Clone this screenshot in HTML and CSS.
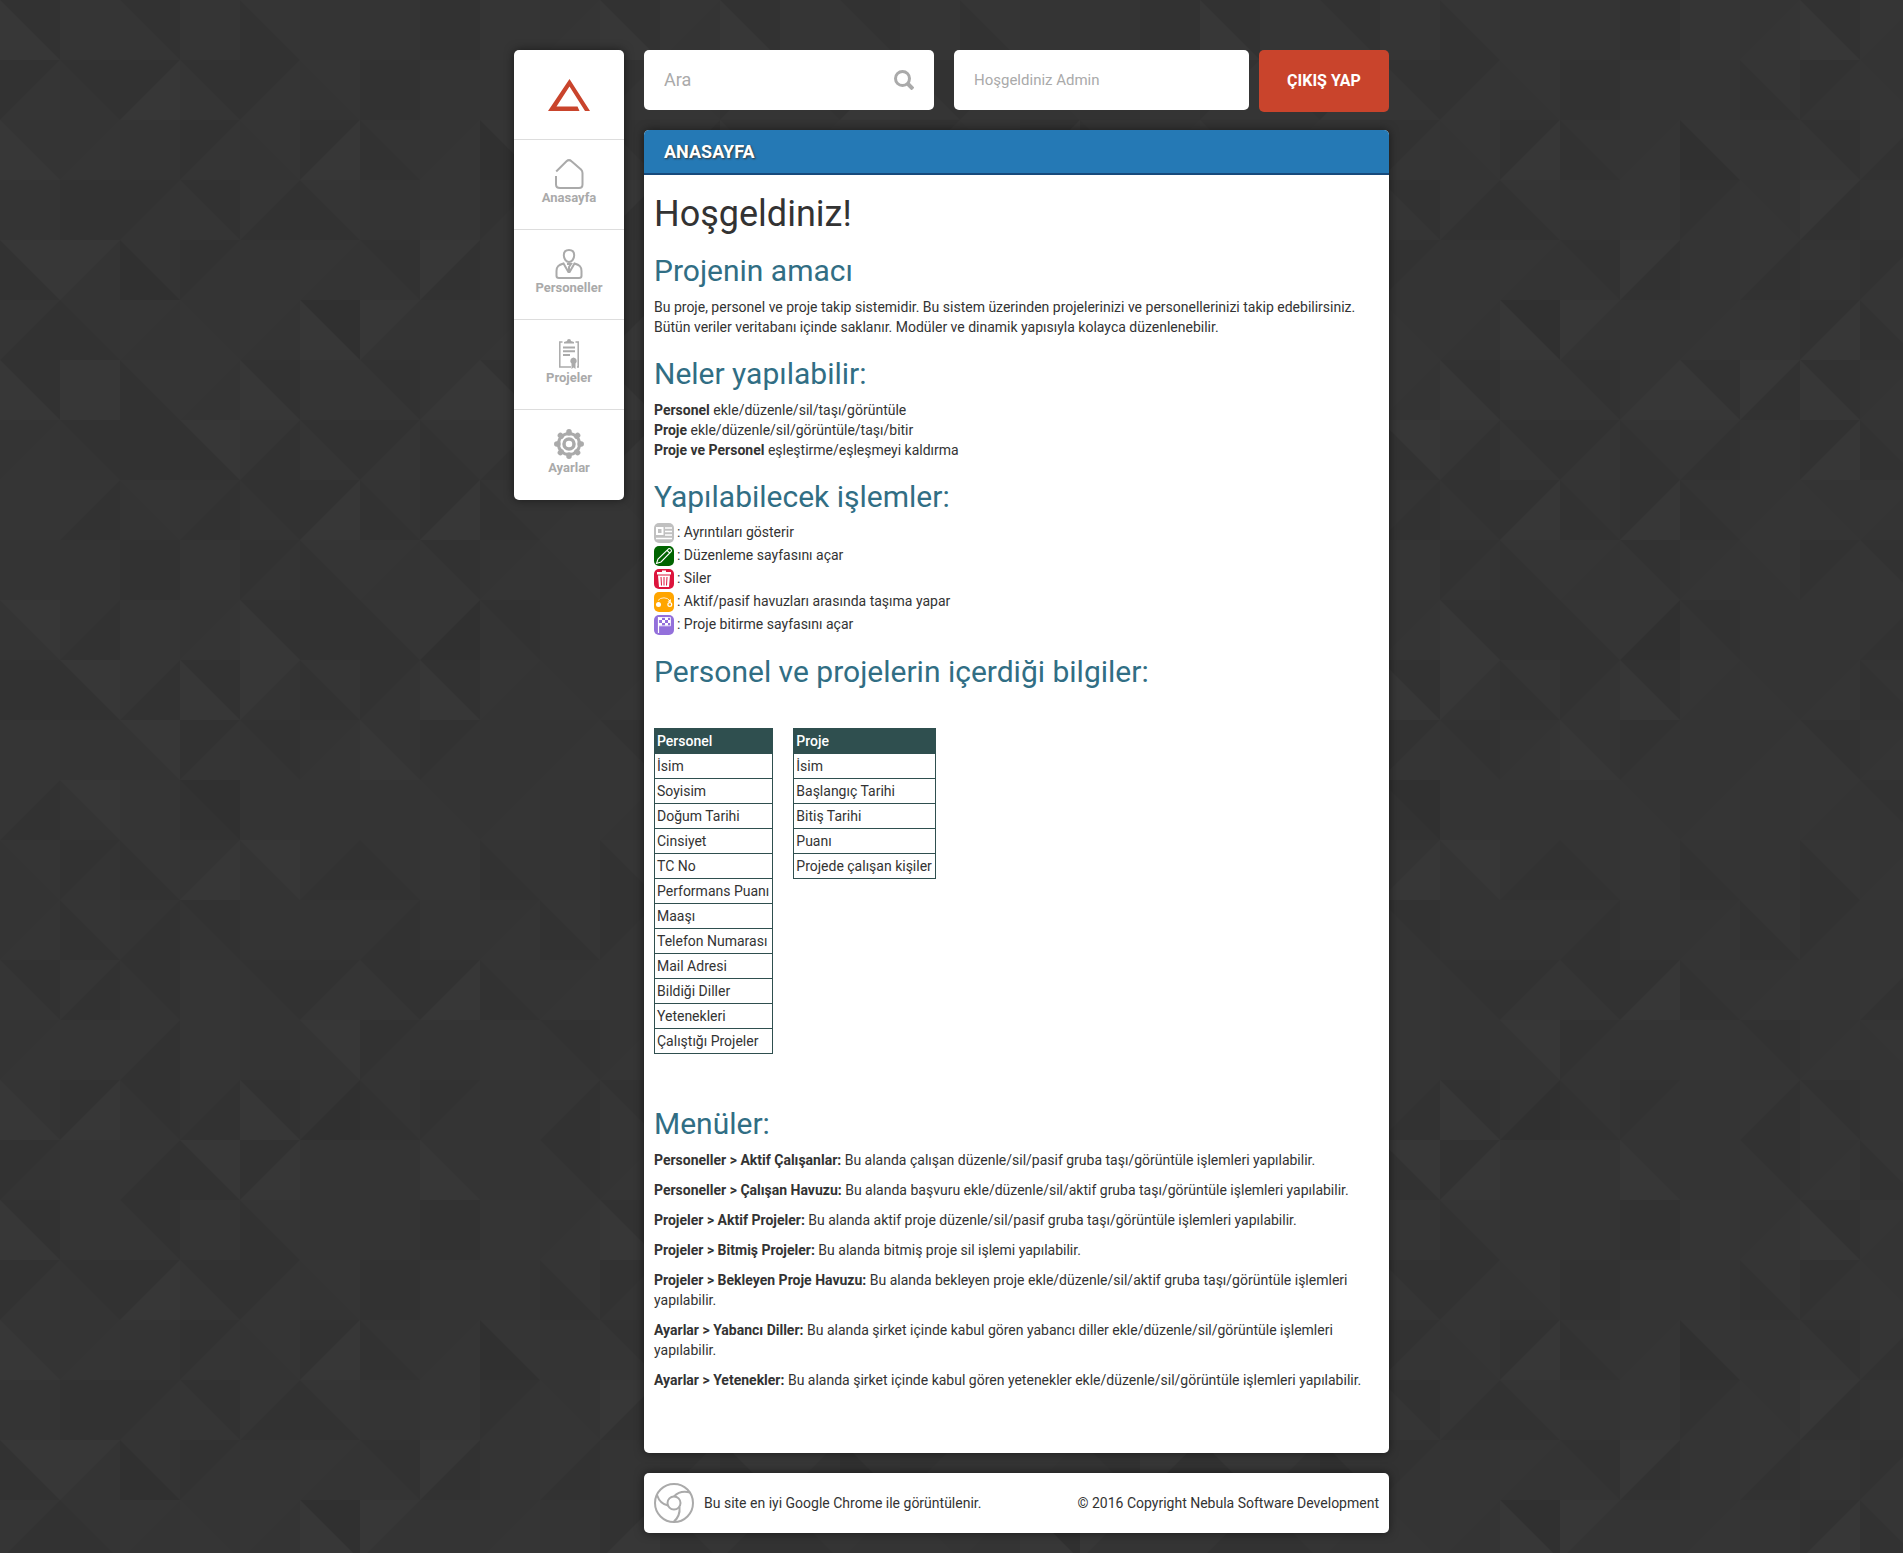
FILE: index.html
```html
<!DOCTYPE html>
<html lang="tr">
<head>
<meta charset="utf-8">
<meta name="viewport" content="width=device-width, initial-scale=1">
<title>Anasayfa</title>
<link rel="stylesheet" href="styles.css">
<script src="background.js" defer></script>
</head>
<body>
<div class="page">
  <nav class="sidebar">
    <a class="side-item logo" href="#" aria-label="Logo">
      <svg width="42" height="32" viewBox="0 0 42 32"><path fill="#c9442c" fill-rule="evenodd" d="M21.500 0 42 32H37L21.500 7.500 8.500 27.500H29.500L31.500 32H0Z"/></svg>
    </a>
    <a class="side-item" href="#">
      <svg class="icon" viewBox="0 0 30 30"><path d="M2.200 12.500 12.500 2.300Q15 0 17.500 2.300L27 10.500Q28.500 12 28.500 14V25.500Q28.500 29 25 29H6Q2 29 2 25.500V17"/></svg>
      <span>Anasayfa</span>
    </a>
    <a class="side-item" href="#">
      <svg class="icon" viewBox="0 0 30 30"><path d="M15 1C11.800 1 9.800 3.200 9.800 6.300S12 13 15 13 20.200 9.500 20.200 6.300 18.200 1 15 1ZM9.500 14.500C4.500 16 2.500 17.500 2.500 22V27Q2.500 29 5 29H25Q27.500 29 27.500 27V22C27.500 17.500 25.500 16 20.500 14.500L15.600 23H14.400ZM13 15H17L15 18V22"/></svg>
      <span>Personeller</span>
    </a>
    <a class="side-item" href="#">
      <svg class="icon" viewBox="0 0 30 30"><path stroke-width="1.500" d="M8.500 3H5.800V28H17M21.500 3H24.200V28H23"/><path d="M9 8.500H21M9 12.300H21M9 16H16"/><path class="solid" d="M10 4.500V3L13 2Q13 0 15 0T17 2L20 3V4.500ZM19.500 18.500a3.400 3.400 0 0 1 2 6V30L19.500 28.500 17.500 30V24.500a3.400 3.400 0 0 1 2-6Z"/></svg>
      <span>Projeler</span>
    </a>
    <a class="side-item" href="#">
      <svg class="icon" viewBox="0 0 30 30"><circle cx="15" cy="15" r="5" stroke-width="3.500"/><circle cx="15" cy="15" r="10.600" stroke-width="3"/><path stroke-width="5.500" stroke-linecap="round" d="M15 2.800V4M15 26V27.200M2.800 15H4M26 15H27.200M6.400 6.400 7.200 7.200M22.800 22.800 23.600 23.600M23.600 6.400 22.800 7.200M7.200 22.800 6.400 23.600"/></svg>
      <span>Ayarlar</span>
    </a>
  </nav>

  <div class="column">
    <header class="topbar">
      <form class="search" role="search">
        <input type="search" placeholder="Ara" aria-label="Ara">
        <button type="button" aria-label="Ara">
          <svg width="20" height="20" viewBox="0 0 20 20"><circle cx="8.500" cy="8.500" r="7"/><path stroke-width="4" d="M13.500 13.500 19 19"/></svg>
        </button>
      </form>
      <div class="welcome">Hoşgeldiniz Admin</div>
      <button class="logout" type="button">ÇIKIŞ YAP</button>
    </header>

    <main class="card">
      <div class="card-title">ANASAYFA</div>
      <div class="content">
        <h1>Hoşgeldiniz!</h1>
        <h2>Projenin amacı</h2>
        <p>Bu proje, personel ve proje takip sistemidir. Bu sistem üzerinden projelerinizi ve personellerinizi takip edebilirsiniz. Bütün veriler veritabanı içinde saklanır. Modüler ve dinamik yapısıyla kolayca düzenlenebilir.</p>
        <h2>Neler yapılabilir:</h2>
        <p><b>Personel</b> ekle/düzenle/sil/taşı/görüntüle<br><b>Proje</b> ekle/düzenle/sil/görüntüle/taşı/bitir<br><b>Proje ve Personel</b> eşleştirme/eşleşmeyi kaldırma</p>
        <h2>Yapılabilecek işlemler:</h2>
        <ul class="actions">
          <li><svg class="badge gray" viewBox="0 0 20 20"><path fill="#fff" fill-rule="evenodd" d="M2 4H9.500V12H2ZM4 6V10H7.500V6Z"/><path stroke="#fff" stroke-width="1.700" d="M11 5H18M11 8.500H18M11 12H18M2 15.500H18"/></svg>: Ayrıntıları gösterir</li>
          <li><svg class="badge green" viewBox="0 0 20 20"><path fill="none" stroke="#fff" stroke-width="1.100" d="M2.500 17.500 4 13 14.500 2.800Q15.500 2 16.700 3.200T17.300 5.500L7 16ZM13 4.300 15.800 7"/></svg>: Düzenleme sayfasını açar</li>
          <li><svg class="badge red" viewBox="0 0 20 20"><path fill="#fff" d="M3 3H8V1.500H12V3H17V5.500H3ZM4 6.500H16L15 18H5Z"/><path stroke="#dc143c" d="M7 8 7.500 16.500M10 8V16.500M13 8 12.500 16.500"/></svg>: Siler</li>
          <li><svg class="badge orange" viewBox="0 0 20 20"><circle cx="4.500" cy="12.500" r="2.500" fill="#fff"/><circle cx="15.800" cy="12.500" r="1.900" fill="none" stroke="#fff" stroke-width="1.200"/><path fill="none" stroke="#fff" stroke-width=".8" d="M4 8.500Q6 5.800 10 5.800T16 9"/><path fill="#fff" d="M13.500 9.500 16.800 7V10Z"/></svg>: Aktif/pasif havuzları arasında taşıma yapar</li>
          <li><svg class="badge purple" viewBox="0 0 20 20"><path stroke="#fff" stroke-width="1.200" d="M4.500 2V18"/><path fill="#fff" d="M5 2.500H8V5H5ZM11 2.500H14V5H11ZM8 5H11V8H8ZM14 5H16.500V8H14ZM5 8H8V10.500H5ZM11 8H14V10.500H11Z"/><path fill="none" stroke="#fff" stroke-width=".8" d="M5 2.500H16.500V10.800H5"/></svg>: Proje bitirme sayfasını açar</li>
        </ul>
        <h2>Personel ve projelerin içerdiği bilgiler:</h2>
        <div class="tables">
          <table>
            <thead><tr><th>Personel</th></tr></thead>
            <tbody>
              <tr><td>İsim</td></tr>
              <tr><td>Soyisim</td></tr>
              <tr><td>Doğum Tarihi</td></tr>
              <tr><td>Cinsiyet</td></tr>
              <tr><td>TC No</td></tr>
              <tr><td>Performans Puanı</td></tr>
              <tr><td>Maaşı</td></tr>
              <tr><td>Telefon Numarası</td></tr>
              <tr><td>Mail Adresi</td></tr>
              <tr><td>Bildiği Diller</td></tr>
              <tr><td>Yetenekleri</td></tr>
              <tr><td>Çalıştığı Projeler</td></tr>
            </tbody>
          </table>
          <table>
            <thead><tr><th>Proje</th></tr></thead>
            <tbody>
              <tr><td>İsim</td></tr>
              <tr><td>Başlangıç Tarihi</td></tr>
              <tr><td>Bitiş Tarihi</td></tr>
              <tr><td>Puanı</td></tr>
              <tr><td>Projede çalışan kişiler</td></tr>
            </tbody>
          </table>
        </div>
        <h2>Menüler:</h2>
        <p><b>Personeller &gt; Aktif Çalışanlar:</b> Bu alanda çalışan düzenle/sil/pasif gruba taşı/görüntüle işlemleri yapılabilir.</p>
        <p><b>Personeller &gt; Çalışan Havuzu:</b> Bu alanda başvuru ekle/düzenle/sil/aktif gruba taşı/görüntüle işlemleri yapılabilir.</p>
        <p><b>Projeler &gt; Aktif Projeler:</b> Bu alanda aktif proje düzenle/sil/pasif gruba taşı/görüntüle işlemleri yapılabilir.</p>
        <p><b>Projeler &gt; Bitmiş Projeler:</b> Bu alanda bitmiş proje sil işlemi yapılabilir.</p>
        <p><b>Projeler &gt; Bekleyen Proje Havuzu:</b> Bu alanda bekleyen proje ekle/düzenle/sil/aktif gruba taşı/görüntüle işlemleri yapılabilir.</p>
        <p><b>Ayarlar &gt; Yabancı Diller:</b> Bu alanda şirket içinde kabul gören yabancı diller ekle/düzenle/sil/görüntüle işlemleri yapılabilir.</p>
        <p><b>Ayarlar &gt; Yetenekler:</b> Bu alanda şirket içinde kabul gören yetenekler ekle/düzenle/sil/görüntüle işlemleri yapılabilir.</p>
      </div>
    </main>

    <footer class="footer">
      <svg width="40" height="40" viewBox="0 0 40 40"><circle cx="20" cy="20" r="19"/><circle cx="20" cy="20" r="6.500"/><path d="M20 13.500Q26 7 36 9.500M14 22.500Q6 21 3 12M25.500 24Q26.500 33 19.500 39"/></svg>
      <span>Bu site en iyi Google Chrome ile görüntülenir.</span>
      <span class="copyright">© 2016 Copyright Nebula Software Development</span>
    </footer>
  </div>
</div>
</body>
</html>
```
FILE: styles.css
```css
* {
  box-sizing: border-box;
}

body {
  margin: 0;
  background: #343434;
  color: #333;
  font: 14px/20px Roboto, "Liberation Sans", sans-serif;
}

.page {
  display: flex;
  align-items: flex-start;
  gap: 20px;
  max-width: 915px;
  margin: 0 auto;
  padding: 50px 20px 20px;
}

.sidebar,
.card,
.footer {
  background: #fff;
  border-radius: 5px;
  box-shadow: 0 0 10px rgba(0, 0, 0, 0.5);
}

.sidebar {
  flex: 0 0 110px;
}

.side-item {
  display: flex;
  flex-direction: column;
  align-items: center;
  height: 90px;
  padding-top: 19px;
  border-bottom: 1px solid #ddd;
  color: #aaa;
  font-size: 13px;
  font-weight: bold;
  line-height: 18px;
  text-decoration: none;
}

.side-item:last-child {
  border-bottom: 0;
}

.logo {
  padding-top: 29px;
}

.icon {
  width: 30px;
  height: 30px;
  fill: none;
  stroke: #aaa;
  stroke-width: 2;
}

.icon .solid {
  fill: #aaa;
  stroke: none;
}

.column {
  flex: 1;
  min-width: 0;
}

.topbar {
  display: flex;
  align-items: flex-start;
  margin-bottom: 18px;
}

.search {
  display: flex;
  align-items: center;
  flex: 1 1 290px;
  height: 60px;
  margin-right: 20px;
  padding: 0 20px;
  background: #fff;
  border-radius: 5px;
}

.search input {
  flex: 1;
  min-width: 0;
  padding: 0;
  border: 0;
  outline: 0;
  background: none;
  font: 18px/24px Roboto, "Liberation Sans", sans-serif;
}

.search input::placeholder {
  color: #aaa;
}

.search button {
  display: flex;
  padding: 0;
  border: 0;
  background: none;
}

.search svg {
  fill: none;
  stroke: #aaa;
  stroke-width: 3;
}

.welcome {
  flex: 1 1 295px;
  height: 60px;
  margin-right: 10px;
  padding: 0 20px;
  background: #fff;
  border-radius: 5px;
  color: #aaa;
  font-size: 15px;
  line-height: 60px;
}

.logout {
  flex: 0 0 130px;
  height: 62px;
  padding: 0;
  border: 0;
  border-radius: 5px;
  background: #c9442c;
  color: #fff;
  font: bold 16px/20px Roboto, "Liberation Sans", sans-serif;
}

.card {
  margin-bottom: 20px;
}

.card-title {
  padding: 0 20px;
  border-bottom: 2px solid #174a7c;
  border-radius: 5px 5px 0 0;
  background: #2579b5;
  color: #fff;
  font-size: 18px;
  font-weight: bold;
  line-height: 43px;
  text-shadow: 1px 1px 2px #333;
}

.content {
  padding: 20px 10px 63px;
}

h1,
h2 {
  margin: 20px 0 10px;
  font-weight: normal;
}

h1 {
  margin-top: 0;
  font-size: 36px;
  line-height: 39px;
}

h2 {
  color: #316e84;
  font-size: 30px;
  line-height: 33px;
}

p {
  margin: 0 0 10px;
}

p:last-child {
  margin-bottom: 0;
}

.actions {
  display: flex;
  flex-direction: column;
  gap: 3px;
  margin: 0;
  padding: 0;
  list-style: none;
}

.actions li {
  display: flex;
  gap: 3px;
  line-height: 19px;
}

.badge {
  width: 20px;
  height: 20px;
  border-radius: 5px;
}

.gray { background: #c0c0c0; }
.green { background: #006400; }
.red { background: #dc143c; }
.orange { background: #ffa500; }
.purple { background: #9370db; }

.tables {
  display: flex;
  align-items: flex-start;
  gap: 20px;
  margin: 40px 0 53px;
}

table {
  border-collapse: collapse;
}

th,
td {
  padding: 2px 3px 2px 2px;
  border: 1px solid #2f4f4f;
  text-align: left;
}

th {
  background: #2f4f4f;
  color: #fff;
  font-weight: 500;
}

.footer {
  display: flex;
  align-items: center;
  gap: 10px;
  padding: 10px;
}

.footer svg {
  fill: none;
  stroke: #aaa;
  stroke-width: 2;
}

.copyright {
  margin-left: auto;
}
```
FILE: background.js
```js
// Geometric page background: a 20 x 20 grid of 60px cells, each split by a
// diagonal. Every pair of digits is the shade of the upper and lower triangle.
const shades = ['#303030', '#323232', '#343434', '#353535', '#373737'];
const size = 60;
const count = 20;
const rows = [
  '14 33 13 33 31 22 22 11 33 23 14 32',
  '13 12 14 13 13 32 11 22 22 31 12 23',
  '24 23 22 13 32 14 21 23 30 22 13 31',
  '22 11 12 13 31 31 22 33 12 23 41 22',
  '41 42 20 12 22 32 12 41 22 31 22 13',
  '31 21 32 23 32 04 42 22 23 22 14 31',
  '14 44 31 32 14 33 13 24 14 41 14 23',
  '23 12 11 41 31 13 13 21 31 22 14 21',
  '33 31 32 21 12 14 21 14 21 23 23 32',
  '22 22 11 33 12 31 32 13 23 32 12 13',
  '42 21 33 23 14 11 31 30 12 22 22 21',
  '11 41 31 14 42 31 12 14 32 23 23 21',
  '33 22 42 13 12 23 24 12 22 23 13 23',
  '31 42 33 01 22 22 22 23 23 22 32 12',
  '32 12 31 24 42 21 21 33 21 22 31 23',
  '23 31 21 12 22 22 21 22 23 31 12 22',
  '13 31 12 33 12 13 13 14 21 23 22 31',
  '23 33 31 33 22 42 12 22 33 12 23 32',
  '24 14 12 21 14 20 21 12 22 31 13 22',
  '12 33 31 41 14 22 22 24 22 13 23 31'
].map(row => row.split(' '));

let shapes = '';
for (let r = 0; r < count; r++) {
  for (let c = 0; c < count; c++) {
    const [upper, lower] = rows[r][c % 12];
    const x = c * size;
    const y = r * size;
    const diagonal = (c + r) % 2 ? `M${x + size} ${y}L${x} ${y + size}` : `M${x} ${y}L${x + size} ${y + size}`;
    const corner = (c + r) % 2 ? `L${x + size} ${y + size}Z` : `L${x} ${y + size}Z`;
    shapes += `<path fill="${shades[upper]}" d="M${x} ${y}h${size}v${size}h-${size}z"/>`;
    shapes += `<path fill="${shades[lower]}" d="${diagonal}${corner}"/>`;
  }
}

const side = size * count;
const svg = `<svg xmlns="http://www.w3.org/2000/svg" width="${side}" height="${side}">${shapes}</svg>`;
document.body.style.backgroundImage = `url("data:image/svg+xml,${encodeURIComponent(svg)}")`;
```
